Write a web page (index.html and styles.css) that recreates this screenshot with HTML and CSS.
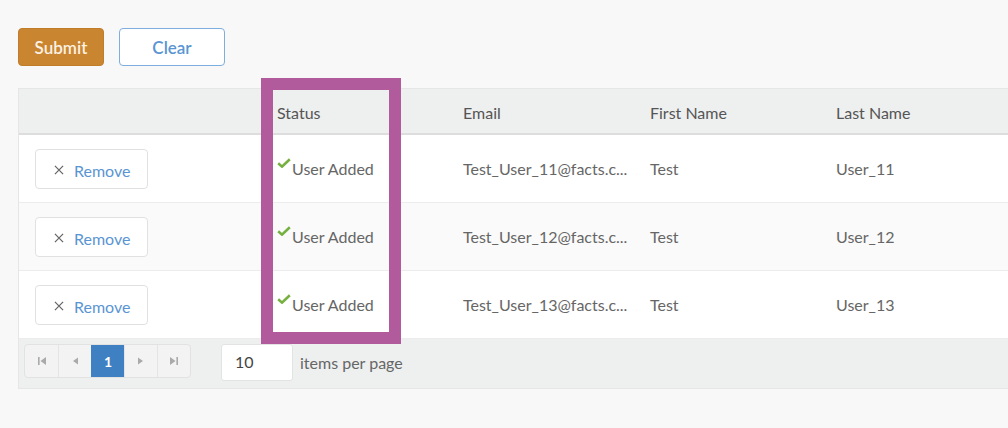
FILE: index.html
```html
<!DOCTYPE html>
<html>
<head>
<meta charset="utf-8">
<link rel="stylesheet" href="styles.css">
</head>
<body>
<div class="page">
  <div class="actions">
    <button class="btn btn-primary">Submit</button>
    <button class="btn btn-outline">Clear</button>
  </div>
  <div class="grid">
    <div class="row head">
      <div class="cell"></div>
      <div class="cell">Status</div>
      <div class="cell">Email</div>
      <div class="cell">First Name</div>
      <div class="cell">Last Name</div>
    </div>
    <div class="row">
      <div class="cell action"><button class="remove"><svg class="x" width="11" height="11" viewBox="0 0 11 11"><path d="M1 1L10 10M10 1L1 10" stroke="#666" stroke-width="1.4"/></svg><span>Remove</span></button></div>
      <div class="cell status"><svg class="check" width="14" height="10" viewBox="0 0 14 10"><path d="M1.2 5.2L5 8.6L12.8 1.2" fill="none" stroke="#76b041" stroke-width="2.6"/></svg>User Added</div>
      <div class="cell" title="Test_User_11@facts.com">Test_User_11@facts.c...</div>
      <div class="cell">Test</div>
      <div class="cell">User_11</div>
    </div>
    <div class="row alt">
      <div class="cell action"><button class="remove"><svg class="x" width="11" height="11" viewBox="0 0 11 11"><path d="M1 1L10 10M10 1L1 10" stroke="#666" stroke-width="1.4"/></svg><span>Remove</span></button></div>
      <div class="cell status"><svg class="check" width="14" height="10" viewBox="0 0 14 10"><path d="M1.2 5.2L5 8.6L12.8 1.2" fill="none" stroke="#76b041" stroke-width="2.6"/></svg>User Added</div>
      <div class="cell" title="Test_User_12@facts.com">Test_User_12@facts.c...</div>
      <div class="cell">Test</div>
      <div class="cell">User_12</div>
    </div>
    <div class="row">
      <div class="cell action"><button class="remove"><svg class="x" width="11" height="11" viewBox="0 0 11 11"><path d="M1 1L10 10M10 1L1 10" stroke="#666" stroke-width="1.4"/></svg><span>Remove</span></button></div>
      <div class="cell status"><svg class="check" width="14" height="10" viewBox="0 0 14 10"><path d="M1.2 5.2L5 8.6L12.8 1.2" fill="none" stroke="#76b041" stroke-width="2.6"/></svg>User Added</div>
      <div class="cell" title="Test_User_13@facts.com">Test_User_13@facts.c...</div>
      <div class="cell">Test</div>
      <div class="cell">User_13</div>
    </div>
    <div class="pager">
      <div class="pages">
        <span class="pg"><svg width="10" height="10" viewBox="0 0 10 10"><rect x="1" y="1" width="1.6" height="8" fill="#aaa"/><path d="M9 1V9L3.5 5Z" fill="#aaa"/></svg></span>
        <span class="pg"><svg width="8" height="10" viewBox="0 0 8 10"><path d="M7 1.5V8.5L2 5Z" fill="#aaa"/></svg></span>
        <span class="pg active">1</span>
        <span class="pg"><svg width="8" height="10" viewBox="0 0 8 10"><path d="M1 1.5V8.5L6 5Z" fill="#aaa"/></svg></span>
        <span class="pg"><svg width="10" height="10" viewBox="0 0 10 10"><path d="M1 1V9L6.5 5Z" fill="#aaa"/><rect x="7.4" y="1" width="1.6" height="8" fill="#aaa"/></svg></span>
      </div>
      <div class="size">10</div>
      <span class="size-label">items per page</span>
    </div>
  </div>
  <div class="highlight"></div>
</div>
</body>
</html>
```

FILE: styles.css
```css
html, body {
  margin: 0;
  padding: 0;
  background: #f8f8f8;
  overflow: hidden;
}
body {
  font-family: Lato, "Open Sans", Arial, sans-serif;
  color: #666;
}
.page {
  position: relative;
  padding: 28px 0 0 18px;
  width: 1100px;
}
.actions {
  display: flex;
  gap: 15px;
}
.btn {
  font-family: Lato, sans-serif;
  font-size: 17px;
  font-weight: 600;
  height: 38px;
  border-radius: 4px;
  box-sizing: border-box;
  cursor: pointer;
  padding: 0;
}
.btn-primary {
  width: 86px;
  background: #c9852f;
  border: 1px solid #c07d2a;
  color: #fcf1e3;
}
.btn-outline {
  width: 106px;
  background: #fff;
  border: 1px solid #7eaee0;
  color: #5a95d3;
}
.grid {
  margin-top: 22px;
  width: 1040px;
  border: 1px solid #e6e6e6;
  border-right: none;
  font-size: 16px;
}
.row {
  display: grid;
  grid-template-columns: 243px 186px 187px 186px 1fr;
  height: 68px;
  box-sizing: border-box;
  background: #fff;
  border-bottom: 1px solid #ececec;
}
.row.alt {
  background: #fafafa;
}
.row.head {
  height: 46px;
  background: #eeefef;
  border-bottom: 2px solid #dddddd;
  color: #555;
}
.cell {
  display: flex;
  align-items: center;
  padding-left: 15px;
  white-space: nowrap;
  min-width: 0;
}
.head .cell {
  padding-top: 3px;
}
.cell.action {
  padding-left: 16px;
}
.remove {
  display: flex;
  align-items: center;
  width: 113px;
  height: 40px;
  box-sizing: border-box;
  background: #fff;
  border: 1px solid #e1e1e1;
  border-radius: 4px;
  padding: 3px 0 0 18px;
  font-family: Lato, sans-serif;
  font-size: 16px;
  color: #5a95d3;
  cursor: pointer;
}
.remove .x {
  width: 10px;
  height: 10px;
  margin-right: 10px;
}
.check {
  align-self: center;
  margin: -12px 1px 0 0;
}
.pager {
  display: flex;
  align-items: flex-start;
  height: 49px;
  box-sizing: border-box;
  padding: 5px 0 0 5px;
  background: #eeefef;
}
.pages {
  display: flex;
  height: 34px;
  box-sizing: border-box;
  border: 1px solid #e2e2e2;
  border-radius: 4px;
  background: #f3f3f3;
  overflow: hidden;
}
.pg {
  width: 33px;
  box-sizing: border-box;
  display: flex;
  align-items: center;
  justify-content: center;
  border-left: 1px solid #e4e4e4;
  font-size: 14px;
}
.pg:first-child {
  border-left: none;
}
.pg.active {
  background: #3e80c2;
  border-left-color: #3e80c2;
  color: #fff;
  font-weight: 700;
}
.size {
  margin-left: 30px;
  width: 72px;
  height: 37px;
  box-sizing: border-box;
  background: #fff;
  border: 1px solid #e3e3e3;
  border-radius: 3px;
  padding: 0 0 2px 13px;
  display: flex;
  align-items: center;
  color: #444;
  font-size: 16px;
}
.size-label {
  align-self: center;
  margin-left: 7px;
  margin-top: -7px;
  color: #666;
}
.highlight {
  position: absolute;
  left: 261px;
  top: 78px;
  width: 140px;
  height: 266px;
  box-sizing: border-box;
  border: 12px solid #b15b9d;
  pointer-events: none;
}
```
